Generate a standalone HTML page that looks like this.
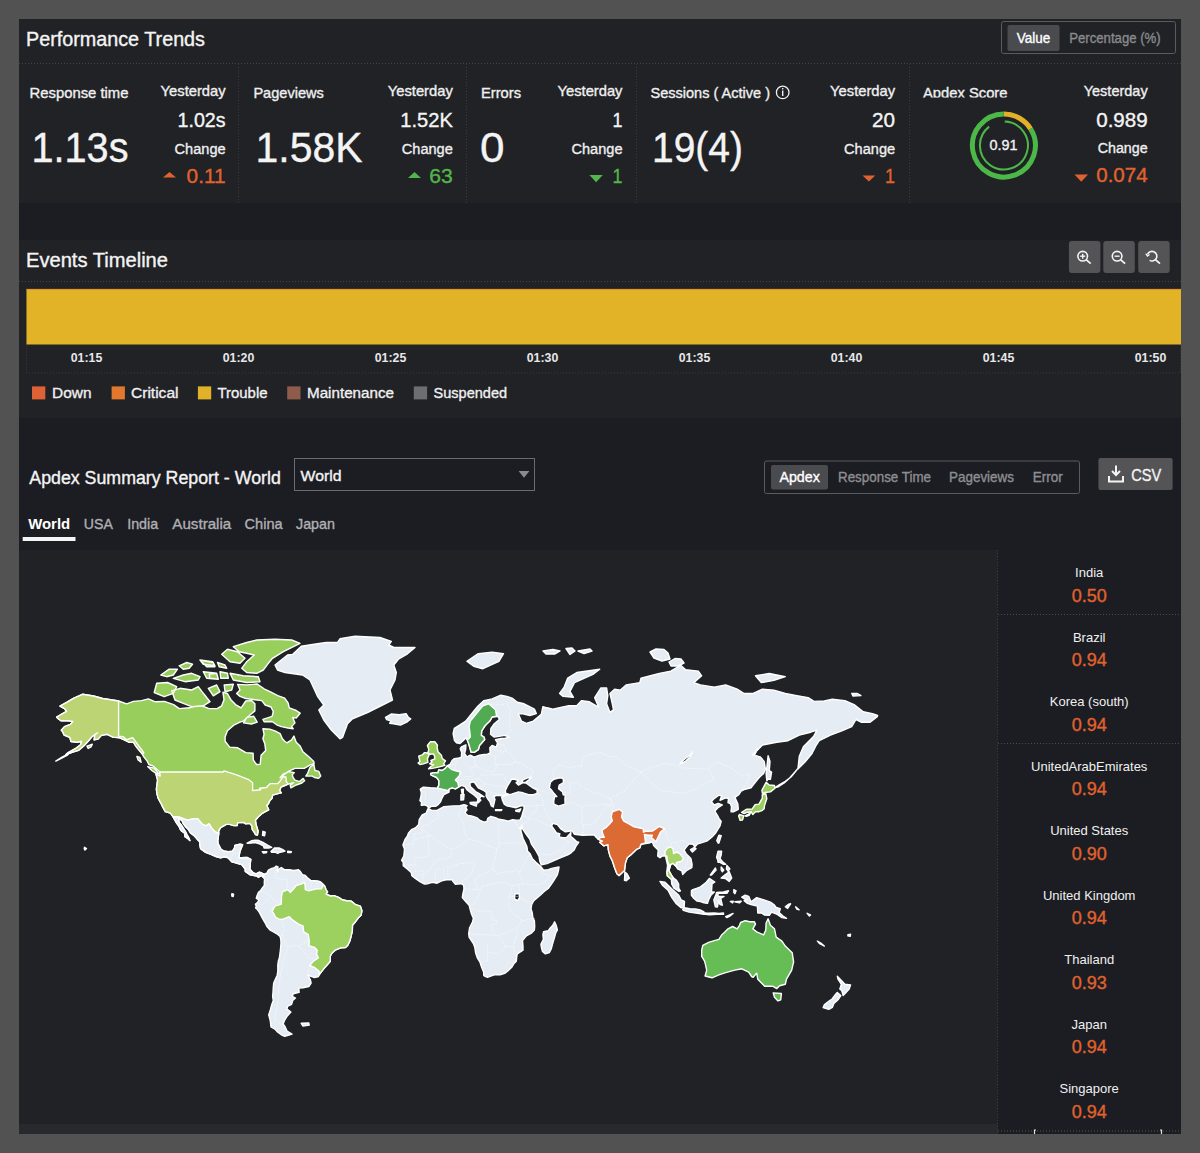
<!DOCTYPE html>
<html><head><meta charset="utf-8"><title>Dashboard</title>
<style>html,body{margin:0;padding:0;background:#525252;width:1200px;height:1153px;overflow:hidden}svg{display:block}text{font-family:"Liberation Sans", sans-serif}</style>
</head><body><svg width="1200" height="1153" viewBox="0 0 1200 1153" font-family='"Liberation Sans", sans-serif'><rect x="0" y="0" width="1200" height="1153" fill="#525252"/><rect x="19" y="19" width="1162" height="1115" fill="#1c1d22"/><rect x="19" y="19" width="1162" height="184" fill="#212226"/><rect x="19" y="240" width="1162" height="178" fill="#212226"/><rect x="19" y="550" width="979" height="584" fill="#212226"/><rect x="19" y="1124" width="979" height="10" fill="#28292d"/><text x="26" y="46.4" font-size="20" fill="#f4f4f4" text-anchor="start" font-weight="normal" stroke="#f4f4f4" stroke-width="0.35" textLength="179" lengthAdjust="spacingAndGlyphs">Performance Trends</text><line x1="19" y1="63.5" x2="1181" y2="63.5" stroke="#44454a" stroke-width="1" stroke-dasharray="1 2"/><line x1="238.5" y1="64" x2="238.5" y2="203" stroke="#3c3d42" stroke-width="1" stroke-dasharray="1 2"/><line x1="466.5" y1="64" x2="466.5" y2="203" stroke="#3c3d42" stroke-width="1" stroke-dasharray="1 2"/><line x1="636.5" y1="64" x2="636.5" y2="203" stroke="#3c3d42" stroke-width="1" stroke-dasharray="1 2"/><line x1="909.5" y1="64" x2="909.5" y2="203" stroke="#3c3d42" stroke-width="1" stroke-dasharray="1 2"/><rect x="1001.5" y="21.5" width="174" height="32" rx="2" fill="none" stroke="#5a5b5f" stroke-width="1"/><rect x="1007.5" y="25" width="52" height="26" rx="2" fill="#4a4b4f"/><text x="1016.7" y="42.8" font-size="14" fill="#ffffff" text-anchor="start" font-weight="normal" stroke="#ffffff" stroke-width="0.35" textLength="33.5" lengthAdjust="spacingAndGlyphs">Value</text><text x="1069.2" y="42.8" font-size="14" fill="#8a8a8e" text-anchor="start" font-weight="normal" stroke="#8a8a8e" stroke-width="0.35" textLength="91.5" lengthAdjust="spacingAndGlyphs">Percentage (%)</text><text x="29.5" y="97.8" font-size="15" fill="#f0f0f0" text-anchor="start" font-weight="normal" stroke="#f0f0f0" stroke-width="0.35" textLength="99" lengthAdjust="spacingAndGlyphs">Response time</text><text x="31.5" y="161.6" font-size="42" fill="#f4f4f4" text-anchor="start" font-weight="normal" stroke="#f4f4f4" stroke-width="0.35" textLength="97" lengthAdjust="spacingAndGlyphs">1.13s</text><text x="225.6" y="96.4" font-size="15" fill="#f0f0f0" text-anchor="end" font-weight="normal" stroke="#f0f0f0" stroke-width="0.35" textLength="65" lengthAdjust="spacingAndGlyphs">Yesterday</text><text x="225.6" y="127" font-size="20" fill="#f4f4f4" text-anchor="end" font-weight="normal" stroke="#f4f4f4" stroke-width="0.35" textLength="48" lengthAdjust="spacingAndGlyphs">1.02s</text><text x="225.6" y="154" font-size="15.5" fill="#f0f0f0" text-anchor="end" font-weight="normal" stroke="#f0f0f0" stroke-width="0.35" textLength="51" lengthAdjust="spacingAndGlyphs">Change</text><text x="225.6" y="183.4" font-size="20" fill="#e0622f" text-anchor="end" font-weight="normal" stroke="#e0622f" stroke-width="0.35" textLength="39" lengthAdjust="spacingAndGlyphs">0.11</text><polygon points="163,177.5 169.5,172 176,177.5" fill="#e0622f"/><text x="253.4" y="97.8" font-size="15" fill="#f0f0f0" text-anchor="start" font-weight="normal" stroke="#f0f0f0" stroke-width="0.35" textLength="70.5" lengthAdjust="spacingAndGlyphs">Pageviews</text><text x="255.5" y="161.6" font-size="42" fill="#f4f4f4" text-anchor="start" font-weight="normal" stroke="#f4f4f4" stroke-width="0.35" textLength="107" lengthAdjust="spacingAndGlyphs">1.58K</text><text x="452.8" y="96.4" font-size="15" fill="#f0f0f0" text-anchor="end" font-weight="normal" stroke="#f0f0f0" stroke-width="0.35" textLength="65" lengthAdjust="spacingAndGlyphs">Yesterday</text><text x="452.8" y="127" font-size="20" fill="#f4f4f4" text-anchor="end" font-weight="normal" stroke="#f4f4f4" stroke-width="0.35" textLength="52.5" lengthAdjust="spacingAndGlyphs">1.52K</text><text x="452.8" y="154" font-size="15.5" fill="#f0f0f0" text-anchor="end" font-weight="normal" stroke="#f0f0f0" stroke-width="0.35" textLength="51" lengthAdjust="spacingAndGlyphs">Change</text><text x="452.8" y="183.4" font-size="20" fill="#52b64a" text-anchor="end" font-weight="normal" stroke="#52b64a" stroke-width="0.35" textLength="23.5" lengthAdjust="spacingAndGlyphs">63</text><polygon points="408,178 414.5,172 421,178" fill="#52b64a"/><text x="481" y="97.8" font-size="15" fill="#f0f0f0" text-anchor="start" font-weight="normal" stroke="#f0f0f0" stroke-width="0.35" textLength="40" lengthAdjust="spacingAndGlyphs">Errors</text><text x="480" y="161.6" font-size="42" fill="#f4f4f4" text-anchor="start" font-weight="normal" stroke="#f4f4f4" stroke-width="0.35" textLength="24.5" lengthAdjust="spacingAndGlyphs">0</text><text x="622.5" y="96.4" font-size="15" fill="#f0f0f0" text-anchor="end" font-weight="normal" stroke="#f0f0f0" stroke-width="0.35" textLength="65" lengthAdjust="spacingAndGlyphs">Yesterday</text><text x="622.5" y="127" font-size="20" fill="#f4f4f4" text-anchor="end" font-weight="normal" stroke="#f4f4f4" stroke-width="0.35" textLength="10" lengthAdjust="spacingAndGlyphs">1</text><text x="622.5" y="154" font-size="15.5" fill="#f0f0f0" text-anchor="end" font-weight="normal" stroke="#f0f0f0" stroke-width="0.35" textLength="51" lengthAdjust="spacingAndGlyphs">Change</text><text x="622.5" y="183.4" font-size="20" fill="#52b64a" text-anchor="end" font-weight="normal" stroke="#52b64a" stroke-width="0.35" textLength="10" lengthAdjust="spacingAndGlyphs">1</text><polygon points="589.4,175 596.0999999999999,182.3 602.8,175" fill="#52b64a"/><text x="650.5" y="97.8" font-size="15" fill="#f0f0f0" text-anchor="start" font-weight="normal" stroke="#f0f0f0" stroke-width="0.35" textLength="119.5" lengthAdjust="spacingAndGlyphs">Sessions ( Active )</text><text x="652" y="161.6" font-size="42" fill="#f4f4f4" text-anchor="start" font-weight="normal" stroke="#f4f4f4" stroke-width="0.35" textLength="91" lengthAdjust="spacingAndGlyphs">19(4)</text><text x="895.1" y="96.4" font-size="15" fill="#f0f0f0" text-anchor="end" font-weight="normal" stroke="#f0f0f0" stroke-width="0.35" textLength="65" lengthAdjust="spacingAndGlyphs">Yesterday</text><text x="895.1" y="127" font-size="20" fill="#f4f4f4" text-anchor="end" font-weight="normal" stroke="#f4f4f4" stroke-width="0.35" textLength="23" lengthAdjust="spacingAndGlyphs">20</text><text x="895.1" y="154" font-size="15.5" fill="#f0f0f0" text-anchor="end" font-weight="normal" stroke="#f0f0f0" stroke-width="0.35" textLength="51" lengthAdjust="spacingAndGlyphs">Change</text><text x="895.1" y="183.4" font-size="20" fill="#e0622f" text-anchor="end" font-weight="normal" stroke="#e0622f" stroke-width="0.35" textLength="10" lengthAdjust="spacingAndGlyphs">1</text><polygon points="862.5,175.5 868.9,181.6 875.3,175.5" fill="#e0622f"/><circle cx="782.7" cy="92.4" r="6.3" fill="none" stroke="#f0f0f0" stroke-width="1.3"/><rect x="782" y="90.5" width="1.4" height="5.5" fill="#f0f0f0"/><rect x="782" y="88" width="1.4" height="1.4" fill="#f0f0f0"/><clipPath id="apclip"><rect x="910" y="70" width="120" height="27.5"/></clipPath><text x="923" y="97.5" font-size="15" fill="#f0f0f0" text-anchor="start" font-weight="normal" stroke="#f0f0f0" stroke-width="0.35" textLength="84.5" lengthAdjust="spacingAndGlyphs" clip-path="url(#apclip)">Apdex Score</text><text x="1147.7" y="96" font-size="15" fill="#f0f0f0" text-anchor="end" font-weight="normal" stroke="#f0f0f0" stroke-width="0.35" textLength="64" lengthAdjust="spacingAndGlyphs">Yesterday</text><text x="1147.7" y="126.6" font-size="20" fill="#f4f4f4" text-anchor="end" font-weight="normal" stroke="#f4f4f4" stroke-width="0.35" textLength="51.5" lengthAdjust="spacingAndGlyphs">0.989</text><text x="1147.7" y="152.7" font-size="15.5" fill="#f0f0f0" text-anchor="end" font-weight="normal" stroke="#f0f0f0" stroke-width="0.35" textLength="50" lengthAdjust="spacingAndGlyphs">Change</text><text x="1147.7" y="182.2" font-size="20" fill="#e0622f" text-anchor="end" font-weight="normal" stroke="#e0622f" stroke-width="0.35" textLength="51.5" lengthAdjust="spacingAndGlyphs">0.074</text><polygon points="1074.5,174.5 1081.25,181.7 1088,174.5" fill="#e0622f"/><path d="M1003.90,114.00 A31.5,31.5 0 0 1 1030.61,128.81" fill="none" stroke="#e2b12a" stroke-width="5"/><path d="M1030.61,128.81 A31.5,31.5 0 1 1 1003.85,114.00" fill="none" stroke="#4cb848" stroke-width="5"/><path d="M1004.74,121.51 A24,24 0 1 1 989.12,126.59" fill="none" stroke="#4cb848" stroke-width="2"/><text x="1003.6" y="150.3" font-size="15" fill="#f4f4f4" text-anchor="middle" font-weight="normal" stroke="#f4f4f4" stroke-width="0.35" textLength="28" lengthAdjust="spacingAndGlyphs">0.91</text><text x="26" y="267" font-size="20" fill="#f4f4f4" text-anchor="start" font-weight="normal" stroke="#f4f4f4" stroke-width="0.35" textLength="142" lengthAdjust="spacingAndGlyphs">Events Timeline</text><line x1="19" y1="281.5" x2="1181" y2="281.5" stroke="#44454a" stroke-width="1" stroke-dasharray="1 2"/><rect x="1068.9" y="241" width="31.5" height="32" rx="3" fill="#545456"/><circle cx="1082.7" cy="256.2" r="4.8" fill="none" stroke="#f4f4f4" stroke-width="1.6"/><line x1="1086.1000000000001" y1="259.59999999999997" x2="1090.7" y2="263.7" stroke="#f4f4f4" stroke-width="1.8"/><line x1="1080.2" y1="256.2" x2="1085.2" y2="256.2" stroke="#f4f4f4" stroke-width="1.4"/><line x1="1082.7" y1="253.7" x2="1082.7" y2="258.7" stroke="#f4f4f4" stroke-width="1.4"/><rect x="1103.3" y="241" width="31.5" height="32" rx="3" fill="#545456"/><circle cx="1117.1" cy="256.2" r="4.8" fill="none" stroke="#f4f4f4" stroke-width="1.6"/><line x1="1120.5" y1="259.59999999999997" x2="1125.1" y2="263.7" stroke="#f4f4f4" stroke-width="1.8"/><line x1="1114.6" y1="256.2" x2="1119.6" y2="256.2" stroke="#f4f4f4" stroke-width="1.4"/><rect x="1138.2" y="241" width="31.5" height="32" rx="3" fill="#545456"/><path d="M1147.49,254.56 A4.8,4.8 0 1 1 1149.60,260.36" fill="none" stroke="#f4f4f4" stroke-width="1.6"/><path d="M1145.80,253.60 l1.6,2.6 l2.2,-1.6" fill="none" stroke="#f4f4f4" stroke-width="1.2"/><line x1="1155.4" y1="259.59999999999997" x2="1160.0" y2="263.7" stroke="#f4f4f4" stroke-width="1.8"/><rect x="26.5" y="289.5" width="1154" height="83.5" fill="none" stroke="#3a3b40" stroke-width="1" stroke-dasharray="1 2"/><rect x="26.5" y="289" width="1154.5" height="55.5" fill="#e3b327"/><line x1="26.5" y1="289.3" x2="1181" y2="289.3" stroke="#e07a3a" stroke-width="0.7"/><text x="86.5" y="362.4" font-size="13" fill="#e8e8e8" text-anchor="middle" font-weight="bold" textLength="31.5" lengthAdjust="spacingAndGlyphs">01:15</text><text x="238.5" y="362.4" font-size="13" fill="#e8e8e8" text-anchor="middle" font-weight="bold" textLength="31.5" lengthAdjust="spacingAndGlyphs">01:20</text><text x="390.5" y="362.4" font-size="13" fill="#e8e8e8" text-anchor="middle" font-weight="bold" textLength="31.5" lengthAdjust="spacingAndGlyphs">01:25</text><text x="542.5" y="362.4" font-size="13" fill="#e8e8e8" text-anchor="middle" font-weight="bold" textLength="31.5" lengthAdjust="spacingAndGlyphs">01:30</text><text x="694.5" y="362.4" font-size="13" fill="#e8e8e8" text-anchor="middle" font-weight="bold" textLength="31.5" lengthAdjust="spacingAndGlyphs">01:35</text><text x="846.5" y="362.4" font-size="13" fill="#e8e8e8" text-anchor="middle" font-weight="bold" textLength="31.5" lengthAdjust="spacingAndGlyphs">01:40</text><text x="998.5" y="362.4" font-size="13" fill="#e8e8e8" text-anchor="middle" font-weight="bold" textLength="31.5" lengthAdjust="spacingAndGlyphs">01:45</text><text x="1150.5" y="362.4" font-size="13" fill="#e8e8e8" text-anchor="middle" font-weight="bold" textLength="31.5" lengthAdjust="spacingAndGlyphs">01:50</text><rect x="32" y="386.4" width="13.3" height="13" fill="#df6236"/><text x="52" y="397.8" font-size="15.5" fill="#f0f0f0" text-anchor="start" font-weight="normal" stroke="#f0f0f0" stroke-width="0.35" textLength="39.5" lengthAdjust="spacingAndGlyphs">Down</text><rect x="111.6" y="386.4" width="13.3" height="13" fill="#e2772e"/><text x="131" y="397.8" font-size="15.5" fill="#f0f0f0" text-anchor="start" font-weight="normal" stroke="#f0f0f0" stroke-width="0.35" textLength="47.5" lengthAdjust="spacingAndGlyphs">Critical</text><rect x="197.9" y="386.4" width="13.3" height="13" fill="#e2b12a"/><text x="217.5" y="397.8" font-size="15.5" fill="#f0f0f0" text-anchor="start" font-weight="normal" stroke="#f0f0f0" stroke-width="0.35" textLength="50" lengthAdjust="spacingAndGlyphs">Trouble</text><rect x="287.2" y="386.4" width="13.3" height="13" fill="#8f5c4c"/><text x="307" y="397.8" font-size="15.5" fill="#f0f0f0" text-anchor="start" font-weight="normal" stroke="#f0f0f0" stroke-width="0.35" textLength="87" lengthAdjust="spacingAndGlyphs">Maintenance</text><rect x="413.8" y="386.4" width="13.3" height="13" fill="#6e6e70"/><text x="433.6" y="397.8" font-size="15.5" fill="#f0f0f0" text-anchor="start" font-weight="normal" stroke="#f0f0f0" stroke-width="0.35" textLength="73.5" lengthAdjust="spacingAndGlyphs">Suspended</text><text x="29.3" y="484" font-size="18" fill="#f4f4f4" text-anchor="start" font-weight="normal" stroke="#f4f4f4" stroke-width="0.35" textLength="251.5" lengthAdjust="spacingAndGlyphs">Apdex Summary Report - World</text><rect x="294.5" y="458.5" width="240" height="32" fill="none" stroke="#6a6b6f" stroke-width="1"/><text x="300.6" y="480.8" font-size="15.5" fill="#f4f4f4" text-anchor="start" font-weight="normal" stroke="#f4f4f4" stroke-width="0.35" textLength="41" lengthAdjust="spacingAndGlyphs">World</text><polygon points="518.6,471 529.4,471 524,477.7" fill="#8a8a8e"/><rect x="764.5" y="461" width="315" height="32.5" rx="2" fill="none" stroke="#5a5b5f" stroke-width="1"/><rect x="771" y="465" width="57" height="24.5" rx="2" fill="#4a4b4f"/><text x="779.4" y="481.6" font-size="14" fill="#ffffff" text-anchor="start" font-weight="normal" stroke="#ffffff" stroke-width="0.35" textLength="40.5" lengthAdjust="spacingAndGlyphs">Apdex</text><text x="838" y="481.6" font-size="14" fill="#8e8e92" text-anchor="start" font-weight="normal" stroke="#8e8e92" stroke-width="0.35" textLength="93" lengthAdjust="spacingAndGlyphs">Response Time</text><text x="949" y="481.6" font-size="14" fill="#8e8e92" text-anchor="start" font-weight="normal" stroke="#8e8e92" stroke-width="0.35" textLength="65" lengthAdjust="spacingAndGlyphs">Pageviews</text><text x="1032.8" y="481.6" font-size="14" fill="#8e8e92" text-anchor="start" font-weight="normal" stroke="#8e8e92" stroke-width="0.35" textLength="30" lengthAdjust="spacingAndGlyphs">Error</text><rect x="1098.4" y="457.9" width="74.2" height="32.2" rx="2" fill="#545456"/><text x="1131.3" y="480.5" font-size="17" fill="#f4f4f4" text-anchor="start" font-weight="normal" stroke="#f4f4f4" stroke-width="0.35" textLength="30" lengthAdjust="spacingAndGlyphs">CSV</text><path d="M1116,465.5 v9 M1112,471 l4,4 l4,-4" fill="none" stroke="#f4f4f4" stroke-width="2"/><path d="M1109,476 v5.5 h14 v-5.5" fill="none" stroke="#f4f4f4" stroke-width="2"/><text x="28.2" y="528.6" font-size="15" fill="#ffffff" text-anchor="start" font-weight="bold" textLength="42" lengthAdjust="spacingAndGlyphs">World</text><text x="83.8" y="528.6" font-size="15" fill="#b0b0b4" text-anchor="start" font-weight="normal" stroke="#b0b0b4" stroke-width="0.35" textLength="29" lengthAdjust="spacingAndGlyphs">USA</text><text x="127.2" y="528.6" font-size="15" fill="#b0b0b4" text-anchor="start" font-weight="normal" stroke="#b0b0b4" stroke-width="0.35" textLength="31" lengthAdjust="spacingAndGlyphs">India</text><text x="172.3" y="528.6" font-size="15" fill="#b0b0b4" text-anchor="start" font-weight="normal" stroke="#b0b0b4" stroke-width="0.35" textLength="59" lengthAdjust="spacingAndGlyphs">Australia</text><text x="244.6" y="528.6" font-size="15" fill="#b0b0b4" text-anchor="start" font-weight="normal" stroke="#b0b0b4" stroke-width="0.35" textLength="38" lengthAdjust="spacingAndGlyphs">China</text><text x="296" y="528.6" font-size="15" fill="#b0b0b4" text-anchor="start" font-weight="normal" stroke="#b0b0b4" stroke-width="0.35" textLength="39" lengthAdjust="spacingAndGlyphs">Japan</text><rect x="22.7" y="537" width="52.8" height="4" fill="#f4f4f4"/><g stroke="#ffffff" stroke-width="1.4" stroke-linejoin="round"><path d="M56.7,717.0L61.3,714.4L66.6,711.3L64.5,708.6L60.0,706.2L67.1,702.2L73.9,698.1L82.4,694.3L93.4,696.0L102.6,698.5L118.6,701.0L126.6,703.8L133.5,701.4L141.5,700.6L148.4,698.9L155.3,701.8L164.4,701.4L173.6,704.6L179.3,708.6L189.6,707.8L198.8,704.6L209.1,708.6L217.1,708.6L221.7,705.8L224.0,699.7L222.9,692.2L227.4,693.5L230.9,699.7L235.5,704.6L241.2,707.8L245.8,701.0L251.5,700.6L254.9,703.8L254.9,710.9L250.3,714.7L243.5,721.1L240.0,722.2L234.3,724.8L227.4,730.8L225.1,737.1L225.1,741.2L229.7,747.1L237.7,747.8L245.8,752.6L253.1,753.3L253.3,759.9L256.5,764.5L260.2,764.2L261.1,755.2L265.7,750.4L264.8,743.8L262.9,738.8L264.1,734.3L262.9,728.7L269.8,729.1L275.5,731.2L280.1,733.6L282.4,738.8L284.7,741.2L287.0,742.8L291.6,739.8L293.9,736.1L296.2,742.2L300.1,746.1L303.0,751.7L308.8,756.8L313.8,761.4L314.0,763.6L309.9,765.1L304.2,768.4L295.0,768.4L289.3,770.8L283.6,774.9L280.1,777.8L283.6,773.8L289.3,771.7L294.3,772.6L292.3,774.9L293.2,777.8L295.0,780.1L299.6,781.6L303.0,778.4L304.6,780.7L301.9,783.0L296.2,785.0L290.9,787.8L290.2,785.3L293.6,782.7L288.1,784.1L284.7,785.5L280.8,787.2L279.7,790.6L281.3,792.8L277.8,793.6L272.6,795.2L271.9,798.5L269.8,800.6L268.2,804.1L266.8,805.6L268.7,809.8L265.7,811.4L261.8,813.7L258.4,816.8L255.4,820.3L256.1,824.6L258.1,831.3L257.4,835.2L255.4,834.5L254.2,832.1L252.2,829.3L251.9,825.9L249.7,823.4L245.8,823.9L243.5,822.4L237.7,822.6L237.1,825.6L233.6,825.6L229.7,824.4L226.3,824.4L220.6,827.6L218.7,830.8L218.7,834.5L217.8,840.6L218.0,843.7L221.0,849.4L224.5,851.3L228.6,851.6L232.5,851.1L234.5,848.2L234.8,845.4L240.0,844.2L242.6,844.7L241.2,848.2L240.0,851.3L239.3,854.9L238.9,857.7L241.2,857.7L246.9,857.5L250.8,859.3L250.3,863.1L250.1,867.0L249.9,869.1L253.1,872.8L256.1,873.8L259.5,872.1L263.4,873.8L264.3,874.4L263.2,877.4L261.8,875.4L258.4,877.2L257.0,876.1L254.2,875.6L250.3,874.9L245.3,871.4L245.1,868.7L241.9,864.7L238.9,863.8L236.6,863.1L232.0,861.9L228.1,857.7L224.5,856.8L220.6,857.9L216.0,856.5L210.3,854.2L205.0,852.0L200.6,848.7L199.9,845.4L199.7,841.8L197.0,838.9L194.2,835.7L190.8,833.3L188.3,829.3L185.3,826.4L183.2,823.4L181.8,820.1L178.6,818.8L179.1,822.4L181.4,825.1L183.4,828.3L185.5,831.6L186.9,834.5L188.5,837.4L189.9,840.6L188.3,838.9L185.0,836.7L184.6,833.3L181.8,831.3L180.0,828.8L179.3,826.9L176.3,822.6L174.5,819.3L173.1,816.8L170.4,813.2L165.3,811.7L162.4,806.4L161.0,803.3L158.0,797.9L156.9,793.3L156.4,789.2L157.6,780.1L156.0,774.0L160.1,776.1L159.8,772.0L156.4,769.0L153.0,766.0L148.8,764.5L147.2,761.1L143.8,756.8L142.2,753.9L139.2,750.4L135.8,746.1L133.5,742.2L128.9,742.2L124.3,739.8L119.8,737.8L112.9,737.1L107.2,734.3L101.4,735.4L98.0,739.1L94.1,739.8L95.0,734.3L97.5,732.9L92.3,736.4L88.8,740.5L84.2,745.5L78.5,750.4L72.8,752.0L65.9,754.5L68.2,752.6L76.2,748.1L80.8,744.5L81.5,741.2L77.4,742.2L71.0,741.5L69.8,737.4L64.1,735.0L62.7,731.9L61.3,730.1L64.5,726.6L70.5,724.4L72.8,721.5L68.2,720.7L60.9,720.7L57.9,718.5Z" fill="#98cf5c" fill-rule="nonzero"/><path d="M56.7,717.0L61.3,714.4L66.6,711.3L64.5,708.6L60.0,706.2L67.1,702.2L73.9,698.1L82.4,694.3L93.4,696.0L102.6,698.5L118.6,701.0L118.6,736.1L123.2,736.7L126.6,739.8L130.1,738.5L132.8,737.8L135.8,741.8L141.5,749.7L143.8,753.0L142.2,753.9L139.2,750.4L135.8,746.1L133.5,742.2L128.9,742.2L124.3,739.8L119.8,737.8L112.9,737.1L107.2,734.3L101.4,735.4L98.0,739.1L94.1,739.8L95.0,734.3L97.5,732.9L92.3,736.4L88.8,740.5L84.2,745.5L78.5,750.4L72.8,752.0L65.9,754.5L68.2,752.6L76.2,748.1L80.8,744.5L81.5,741.2L77.4,742.2L71.0,741.5L69.8,737.4L64.1,735.0L62.7,731.9L61.3,730.1L64.5,726.6L70.5,724.4L72.8,721.5L68.2,720.7L60.9,720.7L57.9,718.5ZM159.8,772.0L223.5,772.0L224.0,770.8L236.6,774.9L248.1,779.3L252.6,782.7L252.6,790.6L260.7,789.7L259.5,788.3L266.4,787.5L270.3,783.6L277.8,783.6L279.4,782.1L283.1,776.7L285.9,777.0L286.3,781.6L288.1,784.1L284.7,785.5L280.8,787.2L279.7,790.6L281.3,792.8L277.8,793.6L272.6,795.2L271.9,798.5L269.8,800.6L268.2,804.1L266.8,805.6L268.7,809.8L265.7,811.4L261.8,813.7L258.4,816.8L255.4,820.3L256.1,824.6L258.1,831.3L257.4,835.2L255.4,834.5L254.2,832.1L252.2,829.3L251.9,825.9L249.7,823.4L245.8,823.9L243.5,822.4L237.7,822.6L237.1,825.6L233.6,825.6L229.7,824.4L226.3,824.4L220.6,827.6L218.7,830.8L218.7,833.5L214.4,831.3L211.4,827.9L209.1,823.9L205.7,825.9L202.2,824.1L197.7,818.8L193.8,818.8L187.3,820.1L178.6,817.0L173.1,816.8L170.4,813.2L165.3,811.7L162.4,806.4L161.0,803.3L158.0,797.9L156.9,793.3L156.4,789.2L157.6,780.1L156.0,774.0L160.1,776.1ZM55.8,761.1L62.5,756.8L68.7,753.6L67.5,755.2L61.3,758.3ZM87.0,746.1L92.3,744.2L91.1,746.8L88.1,748.4Z" fill="#bcd474" fill-rule="nonzero"/><path d="M173.1,816.8L178.6,817.0L187.3,820.1L193.8,818.8L197.7,818.8L202.2,824.1L205.7,825.9L209.1,823.9L211.4,827.9L214.4,831.3L218.7,833.5L217.8,840.6L218.0,843.7L221.0,849.4L224.5,851.3L228.6,851.6L232.5,851.1L234.5,848.2L234.8,845.4L240.0,844.2L242.6,844.7L241.2,848.2L240.0,851.3L239.3,854.9L238.9,857.7L241.2,857.7L246.9,857.5L250.8,859.3L250.3,863.1L250.1,867.0L249.9,869.1L253.1,872.8L256.1,873.8L259.5,872.1L263.4,873.8L264.3,874.4L263.2,877.4L261.8,875.4L258.4,877.2L257.0,876.1L254.2,875.6L250.3,874.9L245.3,871.4L245.1,868.7L241.9,864.7L238.9,863.8L236.6,863.1L232.0,861.9L228.1,857.7L224.5,856.8L220.6,857.9L216.0,856.5L210.3,854.2L205.0,852.0L200.6,848.7L199.9,845.4L199.7,841.8L197.0,838.9L194.2,835.7L190.8,833.3L188.3,829.3L185.3,826.4L183.2,823.4L181.8,820.1L178.6,818.8L179.1,822.4L181.4,825.1L183.4,828.3L185.5,831.6L186.9,834.5L188.5,837.4L189.9,840.6L188.3,838.9L185.0,836.7L184.6,833.3L181.8,831.3L180.0,828.8L179.3,826.9L176.3,822.6L174.5,819.3ZM385.5,717.4L391.2,714.0L399.3,714.7L406.1,713.6L408.4,717.4L410.7,718.9L407.3,721.8L400.4,725.1L393.5,723.7L389.6,723.3L391.2,721.1L386.7,719.6ZM247.1,843.2L251.5,840.8L254.9,840.3L258.4,840.3L262.9,842.3L267.5,845.1L271.7,847.3L268.7,848.0L264.1,848.0L263.4,845.9L259.5,843.9L254.9,842.5L251.5,843.0ZM271.0,851.6L274.4,848.0L279.0,848.0L282.4,849.4L284.9,851.1L282.4,851.8L279.0,852.5L277.8,853.5L275.5,852.3L271.7,852.3ZM262.3,851.6L266.8,851.8L266.2,852.8L263.4,853.0ZM287.7,851.3L291.4,851.6L291.1,852.5L287.7,852.5ZM262.9,831.3L265.2,832.1L264.6,835.7L262.5,835.2ZM264.3,874.4L267.1,872.8L268.4,870.1L271.7,868.4L274.4,867.7L276.2,866.1L278.1,867.0L277.2,869.4L277.6,871.7L278.5,869.4L281.3,867.5L284.7,869.8L289.3,869.8L293.9,870.5L298.5,869.8L300.1,871.2L302.4,874.7L305.3,875.4L308.1,878.4L310.6,880.4L314.5,880.7L317.9,880.9L320.7,882.0L323.4,884.6L324.8,886.2L326.0,889.8L327.6,891.9L326.0,894.2L330.5,896.0L334.0,895.6L338.6,897.4L342.0,899.7L346.6,900.8L351.2,901.1L355.7,904.7L360.3,906.1L361.9,910.7L361.2,914.9L358.0,918.3L355.0,922.3L352.5,925.3L352.3,931.2L351.2,935.9L350.0,940.6L347.7,945.4L345.4,947.6L340.8,947.8L335.1,950.2L331.7,953.4L330.3,956.3L330.3,961.3L327.1,965.0L323.7,968.8L320.2,973.4L318.4,976.5L314.5,977.5L311.7,976.7L307.9,975.2L310.4,979.9L311.1,983.0L308.8,986.5L303.0,987.8L298.9,988.1L299.1,992.4L293.2,993.7L292.3,996.5L295.5,998.1L292.7,1000.6L291.6,1004.3L287.5,1006.5L287.0,1009.1L290.9,1012.0L287.0,1016.4L284.7,1020.0L283.1,1023.9L284.9,1026.4L287.0,1031.0L292.0,1034.2L288.1,1035.4L284.7,1036.4L281.3,1034.8L277.8,1032.3L274.9,1029.1L271.0,1027.0L270.3,1020.9L268.7,1014.9L270.3,1010.0L271.7,1004.8L273.3,1000.6L272.6,996.5L273.0,992.4L273.3,987.0L273.7,983.0L275.5,979.1L277.2,975.2L277.8,971.4L277.8,965.0L278.3,961.3L279.4,957.6L280.1,952.7L280.6,947.8L281.0,943.0L280.8,939.4L280.1,936.6L277.8,934.5L274.4,932.3L269.8,929.8L266.8,926.2L264.8,922.3L262.5,918.3L259.5,912.6L257.0,909.1L255.6,908.0L256.3,906.1L255.4,904.3L257.7,902.2L258.8,899.7L256.3,898.3L257.2,895.3L258.4,892.4L260.7,890.5L261.6,888.9L264.3,885.5L264.3,881.6L264.6,879.1L263.2,877.4ZM301.2,1023.3L308.8,1023.0L309.2,1025.1L303.0,1026.1ZM428.1,808.5L431.3,810.1L437.1,810.4L443.9,806.7L453.1,805.9L460.0,805.6L464.1,804.6L467.1,805.6L465.7,807.5L467.1,809.8L465.0,812.4L466.4,814.2L468.0,815.5L471.4,816.0L476.7,817.6L479.5,820.1L484.0,822.1L487.0,821.4L487.7,818.3L490.9,816.3L495.5,817.6L498.9,819.3L504.7,820.1L508.1,821.1L512.7,819.6L515.7,820.1L516.3,823.4L518.4,827.1L520.2,828.8L521.6,824.6L520.9,830.8L523.0,838.2L525.3,843.0L526.9,846.6L527.6,851.3L530.1,853.7L532.2,858.4L535.6,861.9L539.0,864.9L540.9,866.8L543.6,870.3L548.2,869.6L551.6,868.4L559.0,867.0L558.5,870.3L557.4,874.7L553.9,880.4L551.6,883.9L548.2,888.5L543.6,891.9L540.2,895.3L536.7,898.3L533.8,900.6L531.7,904.5L531.0,909.1L532.2,912.6L532.8,917.2L534.4,920.7L534.7,926.5L534.4,930.0L531.0,933.5L526.4,935.9L522.5,940.6L523.0,946.6L523.0,950.2L517.3,953.9L516.8,956.3L516.3,961.3L513.8,963.8L511.5,967.6L508.1,970.8L504.7,973.4L500.1,974.9L494.3,974.9L492.1,975.7L487.5,977.3L484.7,976.2L483.8,975.5L483.6,972.1L481.7,967.6L480.1,962.5L477.2,957.6L475.6,952.7L474.9,947.8L473.7,944.2L469.1,937.1L468.7,933.5L469.6,927.7L472.6,921.8L473.3,918.3L471.4,913.7L469.8,908.0L469.1,905.2L465.7,901.5L462.3,897.6L463.0,893.1L464.1,888.5L463.4,885.0L461.1,883.7L457.7,884.1L455.4,884.3L453.1,881.6L452.0,879.7L446.2,879.7L441.7,880.9L437.1,883.2L432.5,882.3L427.9,883.7L424.5,884.1L419.9,881.6L415.3,878.4L411.9,875.8L411.2,872.4L407.3,868.9L403.2,865.6L403.2,862.4L401.6,860.3L403.8,856.1L404.3,851.3L404.5,849.0L402.9,844.9L405.0,839.4L407.3,836.2L408.4,833.3L411.4,829.6L415.3,827.9L418.7,824.6L419.2,819.6L422.2,815.0L426.1,813.2L427.4,810.1ZM554.6,921.8L556.2,925.3L557.4,930.0L555.7,933.0L554.6,937.1L552.8,943.0L551.2,949.0L549.3,952.7L545.4,953.9L542.5,951.5L541.5,947.8L540.9,944.2L543.4,939.4L542.9,934.7L543.6,931.6L548.2,930.7L550.5,927.7L552.8,925.3ZM428.8,808.0L427.0,805.9L424.7,804.9L421.3,805.4L421.5,801.9L419.9,800.6L421.0,796.0L421.3,792.5L420.3,789.2L423.3,787.2L430.2,787.8L437.5,788.1L438.9,785.0L438.9,780.7L436.6,777.5L431.3,775.2L430.7,773.5L434.8,772.6L438.0,772.9L438.7,769.9L442.1,770.5L445.3,768.4L447.4,765.7L449.9,764.5L452.4,760.2L454.3,758.6L457.7,758.3L461.4,757.1L461.6,752.3L460.2,748.8L461.4,746.8L465.9,744.8L465.7,749.1L464.6,753.6L466.9,756.8L470.3,755.2L474.2,757.1L479.5,755.2L484.3,754.5L487.5,754.2L490.2,753.0L489.8,747.8L492.1,745.5L496.2,747.1L497.6,742.8L495.5,739.8L501.2,738.5L505.8,738.1L509.2,737.1L504.7,735.4L494.3,737.1L490.5,734.3L490.9,728.4L494.3,723.7L499.6,719.3L497.8,716.3L492.1,717.0L489.8,721.1L485.2,725.5L481.7,730.8L481.3,735.4L484.0,737.1L484.7,739.5L479.5,745.5L478.3,749.7L474.2,752.3L471.0,752.0L470.3,748.8L468.7,743.8L467.3,740.1L465.7,737.8L463.4,740.5L460.0,743.5L456.5,742.8L454.5,740.5L453.1,733.6L454.3,728.4L460.0,724.8L465.7,721.1L470.3,715.5L474.9,709.7L478.3,705.8L484.0,700.6L492.1,698.9L500.8,695.2L506.9,696.4L512.7,698.5L517.3,702.2L524.1,703.8L534.4,709.0L536.3,713.6L529.9,715.5L521.8,713.6L518.4,714.0L521.4,721.1L526.4,723.3L533.3,721.1L541.3,714.4L542.9,706.6L547.0,707.8L552.8,709.3L564.2,706.6L568.8,705.8L576.8,705.8L581.4,700.6L589.4,701.8L596.3,705.8L598.6,707.0L594.7,697.7L597.4,693.5L600.9,687.9L606.6,687.9L607.8,695.6L606.6,703.8L610.0,712.4L613.5,709.7L612.3,703.8L610.0,693.5L614.6,689.2L620.4,690.1L626.1,684.9L639.8,682.6L641.0,678.1L659.3,673.5L670.8,671.1L680.6,665.3L685.7,669.7L698.3,671.1L701.7,675.8L693.7,682.6L700.5,684.9L714.3,687.1L725.7,684.9L737.2,689.2L744.1,693.5L753.2,693.5L762.4,689.2L773.9,690.1L785.3,693.5L796.8,695.6L808.2,697.7L814.0,701.4L824.3,701.0L832.3,699.3L844.9,700.6L854.1,704.6L863.2,711.7L872.4,713.6L877.6,715.5L877.2,716.7L870.1,722.3L861.6,722.3L856.0,719.5L851.7,726.6L841.8,730.8L830.5,735.0L819.2,740.7L816.3,745.0L812.0,753.5L805.0,762.0L797.9,769.1L799.3,756.3L803.6,746.4L813.5,736.5L817.0,730.1L810.7,732.2L799.3,735.0L788.0,740.7L776.7,742.2L762.5,745.0L752.6,754.9L757.8,748.8L754.4,755.2L760.1,756.8L764.2,761.4L765.4,769.0L763.6,773.5L759.0,777.8L755.5,782.1L751.0,787.8L745.2,789.2L741.1,791.1L738.8,794.7L734.9,797.4L737.9,804.1L738.3,809.3L733.8,811.7L731.0,811.7L731.5,806.7L730.3,803.5L728.0,802.7L728.5,798.7L725.7,797.9L720.0,800.3L721.6,796.0L718.9,795.2L713.1,799.5L711.5,801.9L714.3,804.9L718.2,803.3L722.3,804.9L717.7,808.0L714.8,811.1L717.7,815.8L718.9,818.3L721.2,821.4L720.0,825.9L715.4,833.3L712.0,836.9L707.4,840.8L702.8,842.3L697.1,844.2L694.8,847.1L693.0,844.2L689.1,843.9L685.7,847.8L684.1,850.1L686.1,853.7L690.9,858.6L692.1,864.3L691.8,867.7L686.8,870.3L682.7,874.4L681.8,870.8L677.6,868.9L676.0,866.1L672.8,863.3L670.8,864.3L668.9,870.5L671.4,875.1L674.2,878.6L676.5,880.4L678.6,883.9L678.8,888.5L680.4,891.0L678.6,891.2L673.7,887.8L671.7,883.9L671.4,879.3L667.3,875.8L666.9,871.2L667.6,865.4L665.5,856.1L662.7,855.8L660.0,857.7L657.7,856.1L658.2,850.1L653.6,845.4L652.4,841.8L649.0,843.0L645.6,843.5L641.0,844.2L639.8,847.8L636.4,849.4L630.7,854.9L627.2,857.7L625.4,863.1L624.5,870.5L621.0,873.8L619.2,875.6L616.9,873.8L614.6,867.7L612.3,860.7L610.0,856.1L608.4,850.1L608.0,844.7L603.9,845.9L599.7,842.3L602.5,841.1L598.6,839.4L595.8,836.9L594.0,834.7L588.3,835.0L582.6,835.2L574.5,834.3L572.2,830.8L568.8,831.3L565.4,831.8L560.8,828.8L557.4,824.6L552.8,823.4L551.6,825.9L555.1,830.8L556.7,833.3L558.5,833.3L559.9,833.8L559.0,836.9L563.1,837.7L566.5,837.4L570.0,833.8L570.9,832.5L570.6,836.2L573.4,838.6L576.8,841.8L578.7,842.3L575.7,846.6L574.1,850.1L571.1,852.8L567.7,854.9L560.8,857.7L553.9,860.7L547.0,863.6L541.3,864.9L539.7,860.7L539.0,856.1L535.6,850.1L531.5,844.2L529.9,839.4L526.4,834.5L522.3,828.3L521.6,824.6L520.2,828.8L518.4,827.1L516.3,823.4L515.7,820.1L520.0,820.1L521.8,816.3L523.0,811.9L524.1,808.5L523.9,805.9L520.7,805.9L516.1,807.7L511.5,806.7L506.9,805.9L504.2,804.1L502.4,800.1L501.7,797.4L504.7,796.0L508.1,794.7L511.5,794.1L518.4,791.9L523.0,792.8L528.7,794.7L533.3,794.7L537.0,793.3L537.2,790.0L532.8,787.8L528.7,785.0L526.0,783.0L523.0,782.7L518.4,785.0L516.1,782.7L518.4,780.7L513.8,779.0L511.5,779.3L509.5,782.7L507.2,786.4L505.3,790.6L505.8,793.3L508.1,794.0L501.7,795.8L496.6,795.2L494.3,796.6L493.4,796.0L495.0,799.3L493.9,804.1L493.2,807.0L491.4,805.9L490.0,801.9L487.5,798.5L486.1,796.0L486.3,792.5L484.0,790.6L478.3,787.8L474.9,783.0L473.0,781.9L469.8,783.0L470.3,786.4L473.3,789.2L476.0,791.9L478.8,793.3L484.0,796.8L481.1,796.0L479.5,798.7L480.8,800.3L478.3,802.7L477.4,802.2L477.9,798.7L476.0,796.8L473.7,794.7L470.3,792.5L466.9,789.7L465.0,786.7L461.8,785.3L458.8,786.9L455.4,788.9L452.0,787.8L449.0,789.2L449.0,792.2L443.9,794.7L441.7,798.7L440.5,801.9L438.2,804.6L435.9,806.2L431.3,806.4ZM460.9,794.7L464.1,794.4L463.6,799.8L460.9,800.1ZM461.4,789.4L463.4,789.2L463.2,793.6L461.8,793.0ZM470.1,802.5L477.4,801.9L476.2,806.2L470.3,803.8ZM495.5,809.8L501.9,809.8L501.2,810.6L495.5,810.6ZM515.7,810.4L520.9,808.8L519.5,811.7L516.1,811.4ZM466.9,661.3L478.3,653.7L492.1,652.1L503.5,653.7L498.9,661.3L482.9,668.7L473.7,666.3ZM559.6,693.5L564.2,687.1L567.7,678.1L576.8,672.5L599.7,669.2L592.9,674.4L574.5,682.6L570.0,691.4L573.4,697.3L563.1,696.4ZM755.5,675.8L769.3,673.5L785.3,676.7L773.9,680.4L761.3,682.6ZM851.8,693.5L857.5,693.5L860.9,695.6L852.9,696.0ZM766.8,780.7L766.1,773.5L767.0,766.0L768.1,755.8L770.0,761.4L769.3,770.5L771.6,772.0L770.4,779.3L768.1,779.0ZM716.8,840.6L718.9,835.2L721.2,835.7L718.9,843.0L718.2,843.2ZM690.5,849.7L694.1,847.5L696.0,848.7L692.5,852.0ZM624.5,880.4L624.9,871.9L627.2,874.0L629.3,878.1L626.3,880.7ZM716.6,857.2L718.0,851.3L721.6,851.3L721.2,854.9L720.0,858.4L722.3,861.5L725.7,864.3L723.5,864.3L720.0,862.4L718.0,862.2L717.7,860.0ZM721.2,878.1L725.1,874.7L729.2,871.7L731.7,878.1L729.2,881.4L725.7,878.6ZM721.2,867.0L723.9,870.1L722.3,871.7L721.2,869.8ZM726.9,865.4L729.9,868.9L728.0,871.2L726.4,868.9ZM710.2,875.1L715.4,868.0L716.1,870.1L711.5,875.1ZM691.4,890.8L692.8,889.6L697.1,888.2L700.5,886.9L706.3,882.3L709.3,878.4L714.8,882.0L712.0,883.9L711.5,891.9L714.3,891.9L710.9,895.3L708.6,899.9L707.4,903.4L704.0,902.9L700.5,901.5L697.1,901.1L693.7,898.3L691.4,895.3ZM660.0,881.4L665.0,882.3L671.4,888.5L678.8,895.3L681.1,899.9L684.5,901.5L684.1,907.5L681.1,907.7L676.0,903.4L671.9,897.6L668.0,890.1L662.7,885.5ZM682.7,909.8L684.5,907.7L689.8,908.7L695.5,908.9L700.1,910.0L704.0,911.9L704.0,914.2L696.0,913.0L689.1,912.1L683.4,910.3ZM705.1,913.0L707.9,913.3L714.3,913.0L718.9,913.5L723.5,913.0L723.5,914.4L716.6,914.4L709.7,914.9L705.1,914.4ZM725.7,916.7L733.1,913.5L730.3,915.8L726.9,917.6ZM715.4,906.8L714.3,902.2L713.8,899.9L716.1,894.2L716.6,892.4L723.5,891.9L728.5,890.8L726.9,893.3L718.9,893.1L717.3,895.3L719.6,896.5L724.1,896.5L720.7,898.3L722.3,905.2L720.0,904.5L718.6,900.4L717.5,907.0ZM733.8,889.6L736.1,890.8L734.9,893.7L733.8,892.4ZM730.3,901.5L733.3,901.3L732.6,902.9ZM734.9,901.8L741.3,901.1L739.5,902.9ZM741.8,897.2L745.2,895.1L748.7,896.3L751.0,901.8L756.7,897.6L764.7,900.2L770.4,902.2L773.9,904.5L776.2,907.5L780.3,908.7L779.1,912.6L783.0,916.0L786.5,918.3L781.9,917.6L777.3,914.4L771.6,912.1L769.3,915.3L764.7,915.1L761.3,913.0L757.8,913.0L757.4,906.1L751.0,904.5L747.5,903.4L744.1,900.6L747.5,899.5L744.1,898.8ZM785.3,906.8L788.8,904.1L790.6,903.8L787.6,908.4ZM795.6,906.8L799.1,909.8L796.8,909.1ZM837.3,976.2L841.4,980.4L844.9,984.3L850.6,984.9L849.2,989.1L846.0,992.4L843.1,995.4L841.7,990.5L839.8,988.9L841.4,984.3L838.0,979.1ZM837.3,992.4L840.8,995.6L838.0,999.8L833.9,1003.4L832.3,1007.4L828.8,1009.4L823.1,1007.7L824.3,1004.8L827.7,1002.0L832.3,998.7L835.7,994.3ZM823.1,945.4L819.7,943.7L817.4,941.1L820.8,943.0L824.3,946.1ZM847.9,934.7L850.6,934.2L850.2,936.4L847.9,935.9ZM807.1,913.3L810.5,914.9L809.4,916.0ZM84.5,847.3L86.5,848.5L84.9,850.1L84.2,848.5ZM231.8,893.7L233.6,894.2L233.2,896.5L231.8,896.0ZM775.0,787.5L779.6,784.7L785.3,781.3L791.0,777.0L796.3,770.5L797.9,768.4L795.6,771.1L789.9,777.8L784.2,783.0L778.4,786.7Z" fill="#e5ecf4" fill-rule="nonzero"/><path d="M237.7,684.4L246.9,684.9L257.2,684.0L264.1,688.8L271.0,692.2L277.8,695.6L284.7,698.1L288.1,703.0L289.3,707.8L296.2,710.5L300.1,713.2L296.2,718.1L292.7,717.4L295.0,722.9L291.6,726.6L293.2,728.7L288.1,728.0L281.3,726.6L276.7,724.8L272.1,721.5L264.1,721.8L262.9,719.3L272.1,716.3L273.3,711.7L271.0,707.0L265.2,705.0L261.8,700.6L254.9,699.7L245.8,698.5L240.0,696.4L236.6,693.5L240.0,690.1ZM243.5,722.9L246.9,717.4L253.8,716.3L257.2,722.2L251.5,724.0ZM305.8,776.1L307.6,773.5L309.9,767.5L313.8,764.2L315.0,770.5L318.8,771.4L320.7,776.1L318.6,778.4L314.5,777.5L312.2,776.1ZM147.7,766.6L154.1,768.1L158.9,773.8L155.7,773.2L151.8,770.5ZM136.9,756.4L139.9,757.4L141.1,762.3L138.1,759.9Z" fill="#98cf5c" fill-rule="nonzero"/><path d="M154.2,692.5L156.7,683.3L167.5,682.5L176.7,686.7L173.3,693.3L164.2,696.7ZM171.7,690.8L180.0,688.3L191.7,690.0L198.3,686.7L203.3,693.3L210.0,701.7L203.3,705.8L191.7,706.7L183.3,703.3L175.0,700.0ZM160.8,675.0L169.2,669.2L177.5,669.2L173.3,675.0L166.7,676.7ZM173.3,678.3L183.3,675.0L191.7,673.3L200.0,676.7L198.3,680.0L185.0,681.7ZM179.2,665.8L186.7,662.5L192.5,664.2L189.2,668.3L183.3,669.2ZM200.0,660.0L213.3,662.5L215.0,666.7L206.7,666.7ZM203.3,671.7L216.7,673.3L218.3,679.2L206.7,678.3ZM200.0,660.0L212.5,661.7L215.0,665.8L203.3,664.2ZM217.5,662.5L225.0,665.0L226.7,668.3L219.2,666.7ZM220.0,671.7L227.5,673.3L228.3,678.3L220.8,678.3ZM209.2,674.2L216.7,673.3L218.3,679.2L210.0,678.3ZM208.3,688.3L216.7,685.0L220.0,691.7L213.3,695.8ZM224.2,685.0L233.3,684.2L231.7,690.0L225.0,691.7ZM221.7,654.2L227.5,649.2L237.5,651.7L245.0,658.3L240.0,663.3L230.0,661.7ZM233.3,646.7L246.7,642.5L256.7,640.0L275.0,639.2L291.7,640.0L300.0,643.3L283.3,651.7L272.5,658.3L268.3,663.3L263.3,670.0L256.7,673.3L246.7,672.5L241.7,668.3L246.7,661.7L254.2,655.0L246.7,653.3L239.2,651.7ZM230.0,673.3L243.3,675.8L258.3,676.7L260.0,681.7L246.7,682.5L233.3,680.0Z" fill="#98cf5c" fill-rule="nonzero"/><path d="M275.0,665.0L287.5,655.0L292.5,654.4L301.3,646.3L317.5,643.8L326.3,642.5L337.5,642.5L340.0,638.8L355.0,636.3L380.0,637.5L391.3,641.3L388.8,645.0L393.8,647.5L415.0,647.5L407.5,653.8L398.8,658.8L393.8,665.0L396.3,672.5L395.0,680.0L390.0,690.0L392.5,700.0L382.5,705.0L367.5,712.5L352.5,718.8L347.5,723.8L342.5,737.5L340.0,738.8L331.3,730.0L323.8,720.0L318.8,710.0L323.8,705.0L317.5,696.3L310.0,680.0L302.5,675.0L285.0,672.5L277.5,670.0ZM650.0,652.0L656.0,649.0L664.0,649.5L668.0,653.0L670.0,659.0L662.0,661.0L654.0,658.0ZM669.0,662.0L675.0,658.5L681.0,659.0L684.0,663.0L678.0,666.0L671.0,666.0ZM543.0,651.0L553.0,649.5L560.0,651.0L555.0,654.0L546.0,654.0ZM566.0,648.5L572.0,648.0L575.0,651.0L570.0,654.5ZM578.0,651.0L590.0,649.0L592.0,651.0L584.0,653.5Z" fill="#e5ecf4" fill-rule="nonzero"/><path d="M428.6,768.7L433.6,768.1L439.4,766.9L444.9,765.4L443.7,763.6L445.5,760.8L442.3,758.6L441.4,755.2L438.0,751.7L437.1,747.1L437.5,745.2L434.8,741.8L430.2,741.8L427.4,745.5L428.8,749.4L427.9,752.6L430.2,754.2L433.6,753.9L434.8,757.1L434.8,758.9L430.9,760.5L432.0,762.0L429.7,763.9L433.6,764.8L431.3,766.0ZM427.9,762.3L427.4,758.6L429.1,754.9L427.4,753.0L424.5,752.6L422.2,754.9L418.7,756.1L419.2,758.3L419.9,761.4L418.1,763.0L419.9,764.5L423.3,763.9Z" fill="#98cf5c" fill-rule="nonzero"/><path d="M323.4,884.6L324.8,886.2L326.0,889.8L327.6,891.9L326.0,894.2L330.5,896.0L334.0,895.6L338.6,897.4L342.0,899.7L346.6,900.8L351.2,901.1L355.7,904.7L360.3,906.1L361.9,910.7L361.2,914.9L358.0,918.3L355.0,922.3L352.5,925.3L352.3,931.2L351.2,935.9L350.0,940.6L347.7,945.4L345.4,947.6L340.8,947.8L335.1,950.2L331.7,953.4L330.3,956.3L330.3,961.3L327.1,965.0L323.7,968.8L320.2,973.4L319.3,974.4L319.1,971.4L314.3,967.3L309.7,965.5L313.8,960.8L318.4,957.8L316.6,954.1L317.2,950.2L314.5,947.3L309.0,945.7L309.2,940.6L308.3,934.7L303.7,931.9L303.0,926.0L298.5,924.1L292.0,919.5L289.3,916.7L282.4,919.3L279.9,919.5L275.5,917.2L273.9,913.7L272.1,911.4L274.9,906.1L281.3,904.1L281.5,896.5L282.4,891.9L287.7,889.6L290.4,892.4L293.9,888.5L296.2,885.5L301.9,883.9L304.2,882.3L305.1,885.0L305.3,889.6L308.8,890.8L313.4,889.6L316.8,888.9L321.4,888.9Z" fill="#9cd05f" fill-rule="nonzero"/><path d="M447.4,765.7L451.3,769.3L454.9,770.5L460.4,772.0L459.1,776.1L455.4,780.1L457.7,782.1L458.8,786.9L455.4,788.9L452.0,787.8L449.0,789.2L448.5,790.8L437.5,788.1L438.9,785.0L438.9,780.7L436.6,777.5L431.3,775.2L430.7,773.5L434.8,772.6L438.0,772.9L438.7,769.9L442.1,770.5L445.3,768.4ZM467.3,740.1L468.7,743.8L471.0,752.0L474.2,752.3L478.3,749.7L479.5,745.5L484.7,739.5L484.0,737.1L481.3,735.4L481.7,730.8L485.2,725.5L489.8,721.1L492.1,717.0L496.6,716.3L495.5,709.7L488.6,703.8L482.9,705.8L479.5,709.7L474.9,715.5L470.3,721.1L469.1,726.6L469.8,731.9L470.3,737.1Z" fill="#50ab52" fill-rule="nonzero"/><path d="M597.9,839.1L600.9,837.4L604.3,837.2L602.7,833.8L602.0,830.3L606.6,827.1L610.0,823.6L612.3,820.8L611.2,816.8L612.3,811.9L619.2,809.3L622.6,811.9L621.5,817.0L623.8,821.1L627.2,822.9L634.1,826.9L643.3,828.8L643.5,832.1L645.6,831.3L652.4,831.1L659.3,826.4L664.6,828.8L660.5,832.1L658.2,836.9L655.9,841.8L653.6,839.4L651.3,837.7L652.4,835.2L647.9,835.2L644.4,834.5L645.6,843.0L641.0,844.2L639.8,847.8L636.4,849.4L630.7,854.9L627.2,857.7L625.4,863.1L624.5,870.5L621.0,873.8L619.2,875.6L616.9,873.8L614.6,867.7L612.3,860.7L610.0,856.1L608.4,850.1L608.0,844.7L603.9,845.9L599.7,842.3L602.5,841.1Z" fill="#dc6a35" fill-rule="nonzero"/><path d="M665.0,851.3L667.3,848.2L670.8,846.8L673.1,849.0L673.5,853.5L676.5,852.0L679.9,853.7L683.4,858.4L681.8,861.2L676.5,862.4L676.0,866.1L672.8,863.3L670.8,864.3L668.9,870.5L671.4,875.1L673.1,878.6L671.2,879.3L667.3,875.8L666.9,872.4L668.5,868.9L669.6,865.9L667.3,860.7L666.9,856.1L665.0,855.4Z" fill="#a6d46a" fill-rule="nonzero"/><path d="M741.6,812.4L746.4,809.3L752.1,809.1L755.1,804.6L759.0,804.1L762.4,797.9L762.2,794.9L765.8,793.6L766.8,798.7L764.5,805.6L764.2,808.8L761.9,810.6L759.0,811.7L755.5,811.7L752.8,814.5L751.0,811.7L747.5,812.2L744.1,813.5ZM739.5,814.5L743.8,815.8L742.5,820.1L740.0,820.3L738.6,815.8ZM745.2,815.8L750.3,813.2L749.1,815.3L746.4,816.3ZM762.4,793.3L761.9,790.3L766.1,782.4L769.3,785.0L774.5,785.5L775.0,788.3L770.4,791.9L764.7,792.5Z" fill="#98cf5c" fill-rule="nonzero"/><path d="M702.8,945.4L708.6,942.3L714.3,940.6L718.9,939.4L721.9,934.7L724.6,932.3L728.0,928.8L732.6,926.5L737.2,928.8L739.5,925.3L740.6,922.5L745.2,920.7L749.8,921.8L754.4,921.8L755.5,924.1L752.8,928.8L756.7,931.9L763.6,934.9L765.8,930.0L766.1,923.0L768.1,918.8L770.4,925.3L774.5,928.8L776.2,937.1L781.9,941.1L785.3,946.1L792.2,952.7L793.6,961.8L791.7,970.1L786.5,979.1L785.3,984.3L779.6,985.7L776.8,988.6L772.7,986.2L764.7,986.2L761.5,983.0L757.8,979.3L756.7,973.1L753.2,977.3L751.6,976.5L748.7,972.1L741.8,968.8L734.9,970.1L725.7,972.6L718.9,974.9L712.0,977.8L705.1,976.0L706.7,970.1L704.7,961.3L701.7,956.3L701.7,950.2ZM773.2,992.9L781.4,993.5L780.7,999.8L778.0,1000.9L774.5,997.3Z" fill="#66bd55" fill-rule="nonzero"/><path d="M515.2,820.6L520.2,820.6L521.4,824.4L520.0,827.6L517.9,826.9L516.1,823.4Z" fill="#e5ecf4" stroke="none"/><path d="M549.3,787.8L550.5,782.1L553.9,779.3L559.6,777.8L563.1,778.4L563.5,782.7L559.2,785.0L558.5,788.6L562.6,791.9L563.1,794.7L565.4,795.2L564.9,798.7L565.1,804.1L558.5,806.2L553.9,804.1L553.7,801.4L554.6,796.6L556.9,796.6L553.9,793.3L551.2,789.7ZM679.9,764.2L685.7,761.1L690.2,756.8L692.5,752.0L689.8,755.2L684.5,759.3L681.1,762.3ZM515.0,893.7L519.1,893.5L519.5,897.6L517.7,900.6L514.5,898.8ZM521.8,782.4L525.5,782.4L529.2,779.6L531.5,777.3L527.6,777.8L523.0,779.9Z" fill="#1f2025" fill-rule="nonzero"/></g><path d="M437.5,810.4L437.8,813.2L438.9,817.0L433.2,821.1L429.1,823.9L421.7,826.6L421.7,829.1L430.7,835.7L444.4,845.4L451.3,849.0L455.4,849.0L468.9,839.4L476.0,840.6L496.6,849.0M421.7,829.1L421.7,833.3L414.2,833.3L414.2,839.4L411.9,844.7L402.7,844.7M427.9,836.0L429.1,856.1L415.3,858.4L413.7,860.3L415.5,865.6L410.3,864.9L403.2,863.8M430.7,835.7L427.9,836.0L414.2,839.4M461.4,805.6L460.4,811.7L458.8,815.8L463.4,822.9L464.6,834.5L468.9,839.4M498.9,819.3L498.9,843.0L526.0,843.0M496.6,849.0L496.6,847.8L498.9,847.8L498.9,843.0M451.3,849.0L451.3,856.3L442.3,859.8L440.5,859.1L437.1,859.8L429.1,870.8L422.2,876.8L424.5,884.1M415.3,878.4L418.7,874.7L423.3,874.7L423.8,870.5L411.2,872.4M434.8,882.7L435.5,873.5L435.2,868.9L441.7,868.9L443.9,868.9L443.7,875.8L445.3,880.0M447.8,879.5L447.8,866.6L449.9,867.3L459.5,863.6L472.8,862.6L474.9,864.3L472.8,870.1L469.1,877.0L464.1,879.3L461.1,883.7M496.6,849.0L495.5,858.4L492.1,864.9L493.2,868.9L485.2,873.5L477.2,877.0L474.9,882.7L478.3,889.6L484.0,886.2L492.1,883.9L500.1,882.3L504.7,882.7L512.2,885.9L519.5,884.6L523.9,883.7L535.6,885.0L542.5,883.0L551.4,875.8L542.5,873.5L539.7,868.9M493.2,868.9L496.6,874.2L503.5,872.1L510.4,871.7L517.3,870.1L519.5,872.4L526.0,860.7L529.9,853.7M519.5,872.4L521.6,880.0L523.9,883.7M512.2,885.9L509.2,896.5L508.6,904.5L511.5,912.6L517.3,916.0L521.8,920.7L534.4,918.3M519.5,896.5L531.5,905.0M509.2,896.5L519.5,896.5L519.5,884.6M463.0,888.9L467.5,889.2L478.3,889.6M469.1,905.7L473.7,904.5L478.3,896.5L482.4,886.2M469.8,908.0L478.3,911.4L490.9,911.0L492.1,919.5L496.6,920.7L496.6,924.1L492.1,924.1L492.1,931.2L495.5,935.6L498.9,935.4L510.4,930.7L517.3,927.7L521.8,920.7M468.7,934.2L488.6,934.7L495.5,935.6M487.5,945.4L487.5,961.0L479.5,961.5M487.5,952.2L498.9,953.9L505.8,946.6L513.4,946.4L515.0,955.1L517.0,957.3M498.9,935.4L505.8,946.6M513.4,946.4L517.3,933.5L517.3,927.7M407.3,868.9L410.3,864.9M424.7,804.9L425.6,800.1L425.8,792.2L422.9,791.7M474.2,757.1L475.3,763.0L476.0,766.3L484.7,770.5L493.2,771.7L496.6,767.5L495.5,763.0L495.5,757.1L490.2,753.0M476.0,766.3L469.4,768.1L473.3,772.6L471.4,776.4L463.6,776.4L460.4,772.0M457.7,758.3L455.4,763.6L455.4,767.5L454.9,770.5M447.4,765.7L450.8,765.1L455.4,763.6M495.5,764.5L511.5,764.5L515.0,762.0L520.7,763.0L527.6,767.5L533.3,770.5L529.9,777.0M505.8,750.4L513.8,756.8L515.0,762.0M497.6,743.8L504.4,745.5L505.8,750.4L495.5,757.1M489.8,749.4L502.4,751.4M505.8,738.1L506.9,734.7L510.4,731.9L509.2,722.9L510.4,709.7L506.9,703.8L512.2,701.4M488.6,703.8L498.9,705.0L506.9,703.8M455.4,780.1L465.7,779.3L473.0,779.3L479.5,777.8L480.6,774.9L493.2,774.9M479.5,779.3L485.2,783.6L492.1,785.0L493.2,785.8L504.7,786.4L507.2,787.2M493.2,774.9L502.6,774.3L505.8,780.7L509.5,782.7M486.3,792.5L489.8,791.4L493.2,793.3L501.2,793.3L505.8,791.9M473.0,781.9L479.5,779.3M478.3,787.8L485.2,783.6M524.1,806.7L537.9,804.9L543.6,805.4L542.5,798.7L539.0,793.8M533.3,787.8L548.2,793.3L550.5,794.1M550.5,782.1L553.9,779.3M552.8,772.0L558.5,764.5L567.7,767.5L581.4,766.0L582.6,756.8L599.7,752.3L610.0,756.8L616.9,756.8L627.2,766.0L641.0,772.0L652.4,766.9L666.2,763.0L684.5,768.1L708.6,769.0L716.6,761.4L733.8,769.6L741.8,776.4L749.8,774.0L746.4,783.6L741.1,791.1M553.9,779.3L552.8,772.0M563.1,791.9L570.0,793.8L570.0,783.6L575.7,782.1L583.7,787.8L592.9,791.9L602.0,794.7L610.0,798.7L613.5,805.4M641.0,772.0L650.1,782.1L661.6,790.6L682.2,793.3L696.0,789.2L702.8,784.1L714.3,779.3L708.6,769.6M641.0,772.0L630.7,783.6L624.9,790.6L613.5,796.6L610.0,798.7M664.6,828.8L667.3,836.9L670.8,844.2L675.3,842.0L683.4,840.1L689.1,843.9M675.3,842.0L679.9,847.8L685.7,853.7L687.9,860.7L684.5,868.9M581.4,806.7L582.6,819.6L581.2,823.6L583.7,824.9L594.0,823.9L600.9,813.7L605.5,806.7L612.3,805.4M583.7,824.9L582.6,835.2M565.1,804.1L572.2,802.7L581.4,806.7L589.4,805.4L596.3,804.9L604.3,804.1L612.3,805.4M543.6,805.4L545.9,811.9L548.2,815.8L551.6,822.1M523.0,815.8L531.0,818.3L537.9,820.3L548.2,825.6L551.6,825.9M530.5,814.7L535.6,811.9L537.9,804.9M540.2,853.7L549.3,854.9L560.8,850.1L568.8,841.8L559.9,837.4M521.6,824.6L526.4,822.1L531.0,818.3M610.0,798.7L613.5,805.4L612.3,811.9M645.6,831.3L652.4,831.1M276.2,867.7L275.5,878.1L287.0,880.0L287.7,889.6M261.1,891.0L268.7,894.2L272.1,898.8L281.3,904.1M257.7,902.2L260.7,905.7L269.4,897.6M282.4,919.5L283.6,928.8L282.4,934.7L280.4,936.6M282.4,934.7L285.9,944.2L288.1,947.3L292.7,945.4L298.5,945.9L308.8,940.6M288.1,947.3L284.7,957.6L281.3,970.1L279.0,985.7L277.8,1002.0L274.4,1019.4L284.7,1026.4M298.5,945.9L308.8,958.3L313.8,958.8M309.7,965.5L307.9,975.2M304.2,874.7L301.9,882.0M310.6,880.4L312.2,889.6M317.9,880.9L316.8,888.9M230.4,860.7L233.2,853.0L237.3,853.0L239.3,851.6M237.3,857.5L236.8,861.0L240.5,863.6M239.6,857.9L246.9,859.8L250.8,859.6M245.3,868.7L249.9,869.1M251.7,875.8L252.4,872.1" fill="none" stroke="#ffffff" stroke-opacity="0.85" stroke-width="0.8" stroke-dasharray="1.2 1.2"/><text x="1089.2" y="577.2" font-size="13" fill="#f0f0f0" text-anchor="middle" font-weight="normal">India</text><text x="1089.2" y="601.5" font-size="18" fill="#e0622f" text-anchor="middle" font-weight="normal" stroke="#e0622f" stroke-width="0.35">0.50</text><text x="1089.2" y="641.7" font-size="13" fill="#f0f0f0" text-anchor="middle" font-weight="normal">Brazil</text><text x="1089.2" y="666.0" font-size="18" fill="#e0622f" text-anchor="middle" font-weight="normal" stroke="#e0622f" stroke-width="0.35">0.94</text><text x="1089.2" y="706.2" font-size="13" fill="#f0f0f0" text-anchor="middle" font-weight="normal">Korea (south)</text><text x="1089.2" y="730.5" font-size="18" fill="#e0622f" text-anchor="middle" font-weight="normal" stroke="#e0622f" stroke-width="0.35">0.94</text><text x="1089.2" y="770.7" font-size="13" fill="#f0f0f0" text-anchor="middle" font-weight="normal">UnitedArabEmirates</text><text x="1089.2" y="795.0" font-size="18" fill="#e0622f" text-anchor="middle" font-weight="normal" stroke="#e0622f" stroke-width="0.35">0.94</text><text x="1089.2" y="835.2" font-size="13" fill="#f0f0f0" text-anchor="middle" font-weight="normal">United States</text><text x="1089.2" y="859.5" font-size="18" fill="#e0622f" text-anchor="middle" font-weight="normal" stroke="#e0622f" stroke-width="0.35">0.90</text><text x="1089.2" y="899.7" font-size="13" fill="#f0f0f0" text-anchor="middle" font-weight="normal">United Kingdom</text><text x="1089.2" y="924.0" font-size="18" fill="#e0622f" text-anchor="middle" font-weight="normal" stroke="#e0622f" stroke-width="0.35">0.94</text><text x="1089.2" y="964.2" font-size="13" fill="#f0f0f0" text-anchor="middle" font-weight="normal">Thailand</text><text x="1089.2" y="988.5" font-size="18" fill="#e0622f" text-anchor="middle" font-weight="normal" stroke="#e0622f" stroke-width="0.35">0.93</text><text x="1089.2" y="1028.7" font-size="13" fill="#f0f0f0" text-anchor="middle" font-weight="normal">Japan</text><text x="1089.2" y="1053.0" font-size="18" fill="#e0622f" text-anchor="middle" font-weight="normal" stroke="#e0622f" stroke-width="0.35">0.94</text><text x="1089.2" y="1093.2" font-size="13" fill="#f0f0f0" text-anchor="middle" font-weight="normal">Singapore</text><text x="1089.2" y="1117.5" font-size="18" fill="#e0622f" text-anchor="middle" font-weight="normal" stroke="#e0622f" stroke-width="0.35">0.94</text><line x1="998" y1="614.5" x2="1180" y2="614.5" stroke="#4a4b50" stroke-width="1" stroke-dasharray="1 2"/><line x1="998" y1="743.5" x2="1180" y2="743.5" stroke="#4a4b50" stroke-width="1" stroke-dasharray="1 2"/><line x1="997.5" y1="550" x2="997.5" y2="1134" stroke="#3a3b40" stroke-width="1" stroke-dasharray="1 2"/><line x1="998" y1="1131" x2="1180" y2="1131" stroke="#55565a" stroke-width="1" stroke-dasharray="1 2"/><path d="M1034.5,1134 v-4 h1.5 M1161.5,1134 v-4 h-1.5" fill="none" stroke="#e0e0e0" stroke-width="1.2"/></svg></body></html>
